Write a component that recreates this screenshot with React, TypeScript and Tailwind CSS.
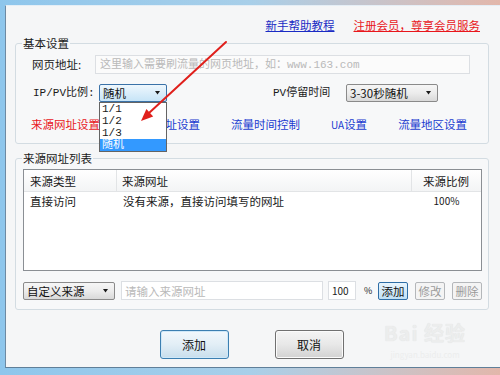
import React from "react";

const cjk = "font-['Noto_Sans_CJK_SC',sans-serif]";
const mono = "font-['Liberation_Mono','Noto_Sans_CJK_SC',monospace]";

const Arrow = () => (
  <svg width="5" height="4" viewBox="0 0 5 4" className="shrink-0">
    <path d="M0 0H5L2.5 3.5Z" fill="#1a1a1a" />
  </svg>
);

const Combo = ({ text, className, focus }: { text: string; className: string; focus?: boolean }) => (
  <div
    className={`flex h-[18px] items-center justify-between rounded-[2px] border pl-[3px] pr-[6px] text-[11.5px] leading-[14px] text-[#111] ${className} ${
      focus
        ? "border-[#3a72a8] bg-linear-to-b from-[#eef7fd] to-[#c6e4f7]"
        : "border-[#8a8a8a] bg-linear-to-b from-[#f6f6f6] via-[#ececec] to-[#d9d9d9]"
    }`}
  >
    <span>{text}</span>
    <Arrow />
  </div>
);

const SmallBtn = ({ text, active }: { text: string; active?: boolean }) => (
  <button
    className={`flex h-[18px] w-[30px] items-center justify-center rounded-[2px] border text-[11.5px] leading-[14px] ${
      active
        ? "border-[#2f6ea6] bg-linear-to-b from-[#e8f5fd] to-[#bfe0f5] text-[#111]"
        : "border-[#b4b7ba] bg-[#f4f4f4] text-[#9a9a9a]"
    }`}
  >
    {text}
  </button>
);

const BigBtn = ({ text, primary }: { text: string; primary?: boolean }) => (
  <button
    className={`flex h-[29px] w-[69px] items-center justify-center rounded-[3px] border text-[12px] text-[#111] ${
      primary
        ? "border-[#3c7fb1] bg-linear-to-b from-[#f2f8fc] via-[#e2eef6] to-[#c8deec] shadow-[inset_0_0_0_1px_#cfe8f8]"
        : "border-[#707070] bg-linear-to-b from-[#f4f4f4] via-[#e8e8e8] to-[#d2d2d2] shadow-[inset_0_0_0_1px_#fbfbfb]"
    }`}
  >
    {text}
  </button>
);

export default function App() {
  return (
    <div className={`flex h-[375px] w-[500px] flex-col bg-linear-to-r from-[#8ec6ec] via-[#a8cfe9] to-[#e2b7ab] pb-[7px] pl-[5px] pt-[5px] ${cjk}`}>
      <div className="relative flex-1 border-b border-l border-t border-b-[#5f7f99] border-l-[#6d8aa3] border-t-[#e4eef6] bg-[#f5f6f7] text-[11.5px] text-[#1a1a1a]">
        {/* top links */}
        <div className="box-content flex h-[14px] items-center justify-end gap-[19px] pr-[20px] pt-[12px] leading-[14px]">
          <span className="text-[#1a2bc4] underline">新手帮助教程</span>
          <span className="text-[#e8161c] underline">注册会员，尊享会员服务</span>
        </div>

        {/* 基本设置 */}
        <div className="pl-[9px] pr-[11px] pt-[4px]">
          <fieldset className="h-[108px] rounded-[3px] border border-[#d3dce2] bg-[#f7f8f9]">
            <legend className="ml-[6px] px-[1px] leading-[14px] text-[#1a1a1a]">基本设置</legend>
            <div className="mt-[5px] flex h-[19px] items-center pl-[16px]">
              <span className="w-[63px]">网页地址:</span>
              <input
                readOnly
                placeholder="这里输入需要刷流量的网页地址，如：www.163.com"
                className={`h-[19px] w-[375px] border border-[#dcdfe3] bg-[#fbfbfb] px-[4px] text-[11px] outline-none placeholder:text-[#b9b9b9] ${mono}`}
              />
            </div>
            <div className="mt-[10px] flex h-[18px] items-center pl-[17px]">
              <span className={`w-[66px] text-[11px] ${mono}`}>IP/PV比例:</span>
              <Combo text="随机" className="w-[68px]" focus />
              <span className={`ml-[106px] w-[73px] text-[11px] ${mono}`}>PV停留时间</span>
              <Combo text="3-30秒随机" className="w-[92px]" />
            </div>
            <div className="mt-[16px] flex h-[13px] items-center gap-[31px] pl-[15px] leading-[13px]">
              <span className="text-[#e8161c]">来源网址设置</span>
              <span className="text-[#1a3bd0]">点击网址设置</span>
              <span className="text-[#1a3bd0]">流量时间控制</span>
              <span className="text-[#1a3bd0]">
                <span className="text-[10px]">UA</span>设置
              </span>
              <span className="text-[#1a3bd0]">流量地区设置</span>
            </div>
          </fieldset>
        </div>

        {/* 来源网址列表 */}
        <div className="pl-[9px] pr-[11px] pt-[7px]">
          <fieldset className="h-[159px] rounded-[3px] border border-[#d3dce2] bg-[#f7f8f9]">
            <legend className="ml-[6px] px-[1px] leading-[14px]">来源网址列表</legend>
            <div className="ml-[7px] mt-[4px] h-[102px] w-[459px] border border-[#8b8f94] bg-white">
              <div className="flex h-[22px] items-center border-b border-[#e2e4e6] bg-linear-to-b from-white to-[#f3f4f5] leading-[14px]">
                <div className="flex h-full w-[93px] items-center border-r border-[#e2e4e6] pl-[6px]">来源类型</div>
                <div className="flex h-full w-[295px] items-center border-r border-[#e2e4e6] pl-[5px]">来源网址</div>
                <div className="flex h-full flex-1 items-center justify-end pr-[12px]">来源比例</div>
              </div>
              <div className="flex h-[18px] items-center leading-[14px]">
                <div className="w-[93px] pl-[6px]">直接访问</div>
                <div className="w-[295px] pl-[6px]">没有来源，直接访问填写的网址</div>
                <div className="flex-1 text-center text-[10px]">100%</div>
              </div>
            </div>
            <div className="ml-[7px] mt-[10px] flex h-[19px] items-center">
              <Combo text="自定义来源" className="w-[92px]" />
              <input
                readOnly
                placeholder="请输入来源网址"
                className="ml-[6px] h-[19px] w-[202px] border border-[#dcdfe3] bg-white px-[3px] text-[11.5px] outline-none placeholder:text-[#b9b9b9]"
              />
              <input
                readOnly
                defaultValue="100"
                className="ml-[5px] h-[19px] w-[28px] border border-[#dcdfe3] bg-white px-[3px] text-[10px] outline-none"
              />
              <span className="ml-[8px] w-[14px] text-[9px]">%</span>
              <SmallBtn text="添加" active />
              <span className="w-[7px]" />
              <SmallBtn text="修改" />
              <span className="w-[7px]" />
              <SmallBtn text="删除" />
            </div>
          </fieldset>
        </div>

        {/* dialog buttons */}
        <div className="mt-[20px] flex justify-center gap-[46px] pr-[3px]">
          <BigBtn text="添加" primary />
          <BigBtn text="取消" />
        </div>

        {/* watermark */}
        <div className="pointer-events-none absolute left-[378px] top-[312px] flex flex-col items-center text-[#eceded]">
          <span className="h-[30px] text-[20px] font-bold leading-[30px] tracking-[1px] [text-shadow:0_0_1px_#dcdee0]">Bai 经验</span>
          <span className="mt-[1px] text-[8px] leading-[12px]">jingyan.baidu.com</span>
        </div>

        {/* open dropdown */}
        <div className={`absolute left-[93px] top-[96px] w-[68px] border border-[#646464] bg-white text-[11px] leading-[12px] ${mono}`}>
          <div className="h-[12px] pl-[2px]">1/1</div>
          <div className="h-[12px] pl-[2px]">1/2</div>
          <div className="h-[12px] pl-[2px]">1/3</div>
          <div className="h-[12px] bg-[#3399ff] pl-[2px] text-white">随机</div>
        </div>

        {/* red annotation arrow */}
        <svg className="pointer-events-none absolute left-0 top-0" width="494" height="362">
          <line x1="220" y1="36" x2="143" y2="107" stroke="#e0201c" strokeWidth="2" strokeLinecap="round" />
          <polygon points="135,115 147.2,110.5 140.4,103.1" fill="#e0201c" />
        </svg>
      </div>
    </div>
  );
}
